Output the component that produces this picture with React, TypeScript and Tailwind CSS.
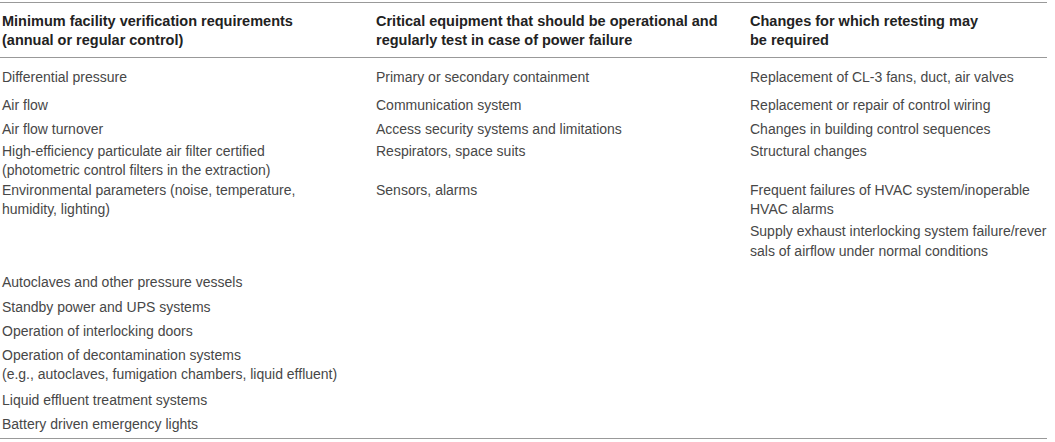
type Row = {
  pad: string;
  lead: string;
  cells: string[][];
};

const rows: Row[] = [
  {
    pad: "pt-[9px]",
    lead: "leading-[20px]",
    cells: [["Differential pressure"], ["Primary or secondary containment"], ["Replacement of CL-3 fans, duct, air valves"]],
  },
  {
    pad: "pt-[8px]",
    lead: "leading-[20px]",
    cells: [["Air flow"], ["Communication system"], ["Replacement or repair of control wiring"]],
  },
  {
    pad: "pt-[3.5px]",
    lead: "leading-[20px]",
    cells: [["Air flow turnover"], ["Access security systems and limitations"], ["Changes in building control sequences"]],
  },
  {
    pad: "pt-[3.5px]",
    lead: "leading-[19px]",
    cells: [
      ["High-efficiency particulate air filter certified", "(photometric control filters in the extraction)"],
      ["Respirators, space suits"],
      ["Structural changes"],
    ],
  },
  {
    pad: "pt-[0.5px]",
    lead: "leading-[19px]",
    cells: [
      ["Environmental parameters (noise, temperature,", "humidity, lighting)"],
      ["Sensors, alarms"],
      ["Frequent failures of HVAC system/inoperable", "HVAC alarms"],
    ],
  },
  {
    pad: "pt-[3.5px]",
    lead: "leading-[19.5px]",
    cells: [[], [], ["Supply exhaust interlocking system failure/rever", "sals of airflow under normal conditions"]],
  },
  {
    pad: "pt-[11px]",
    lead: "leading-[20px]",
    cells: [["Autoclaves and other pressure vessels"], [], []],
  },
  {
    pad: "pt-[4.5px]",
    lead: "leading-[20px]",
    cells: [["Standby power and UPS systems"], [], []],
  },
  {
    pad: "pt-[4.5px]",
    lead: "leading-[20px]",
    cells: [["Operation of interlocking doors"], [], []],
  },
  {
    pad: "pt-[4.5px]",
    lead: "leading-[19.5px]",
    cells: [["Operation of decontamination systems", "(e.g., autoclaves, fumigation chambers, liquid effluent)"], [], []],
  },
  {
    pad: "pt-[5px]",
    lead: "leading-[20px]",
    cells: [["Liquid effluent treatment systems"], [], []],
  },
  {
    pad: "pt-[4.5px]",
    lead: "leading-[20px]",
    cells: [["Battery driven emergency lights"], [], []],
  },
];

const headers = [
  ["Minimum facility verification requirements", "(annual or regular control)"],
  ["Critical equipment that should be operational and", "regularly test in case of power failure"],
  ["Changes for which retesting may", "be required"],
];

function Lines({ lines }: { lines: string[] }) {
  return (
    <>
      {lines.map((l, i) => (
        <div key={i} className="whitespace-nowrap">
          {l}
        </div>
      ))}
    </>
  );
}

export default function App() {
  return (
    <div className="w-[1055px] h-[442px] bg-white pt-[2px]" style={{ fontFamily: '"Liberation Sans", Arial, sans-serif' }}>
      <div className="w-[1047px] border-t border-b border-[#999] pb-[4px]">
        <div className="grid grid-cols-[374px_374px_1fr] pl-[2px] pt-[9px] pb-[7px] border-b border-[#999] text-[14.5px] leading-[19px] font-bold text-[#222]">
          {headers.map((h, i) => (
            <div key={i}>
              <Lines lines={h} />
            </div>
          ))}
        </div>
        {rows.map((r, i) => (
          <div key={i} className={`grid grid-cols-[374px_374px_1fr] pl-[2px] text-[14px] text-[#474747] ${r.pad} ${r.lead}`}>
            {r.cells.map((c, j) => (
              <div key={j}>
                <Lines lines={c} />
              </div>
            ))}
          </div>
        ))}
      </div>
    </div>
  );
}
